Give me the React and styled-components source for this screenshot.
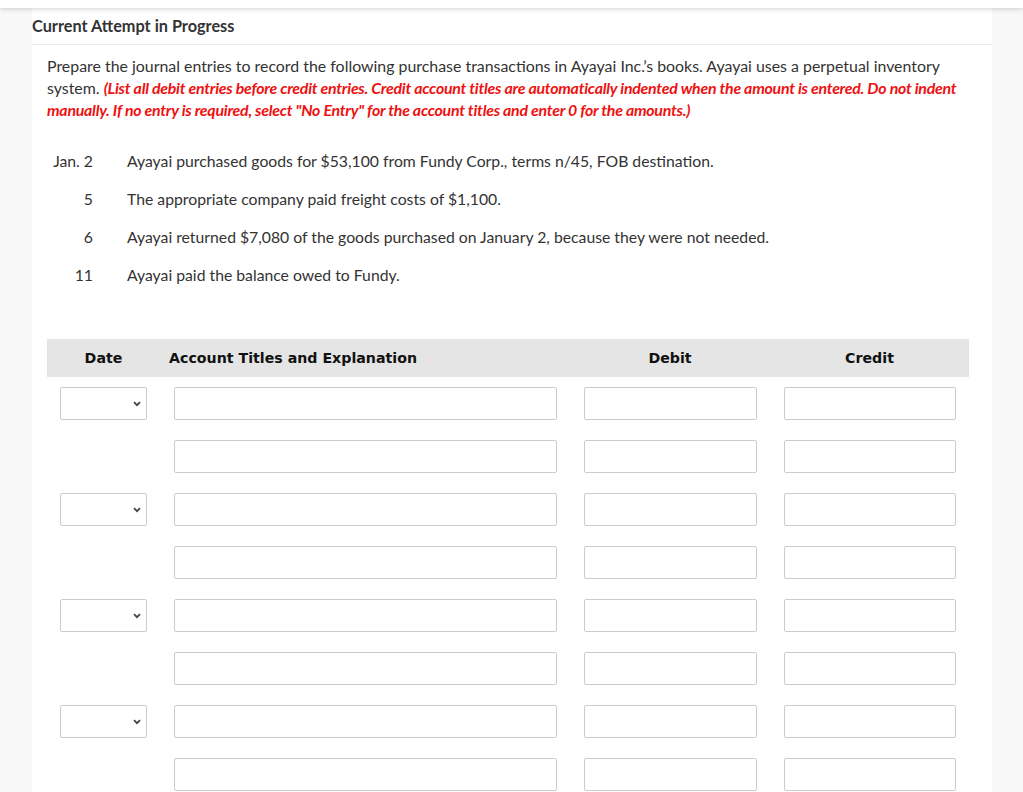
import styled, { createGlobalStyle } from "styled-components";

const GlobalStyle = createGlobalStyle`
  body {
    margin: 0;
    background: #f8f8f8;
    font-family: Lato, "Noto Sans", sans-serif;
    color: #333;
  }
`;

const transactions = [
  { date: "Jan. 2", text: "Ayayai purchased goods for $53,100 from Fundy Corp., terms n/45, FOB destination." },
  { date: "5", text: "The appropriate company paid freight costs of $1,100." },
  { date: "6", text: "Ayayai returned $7,080 of the goods purchased on January 2, because they were not needed." },
  { date: "11", text: "Ayayai paid the balance owed to Fundy." },
];

const rows = [true, false, true, false, true, false, true, false];

const Chevron = () => (
  <svg width="8" height="6" viewBox="0 0 8 6">
    <path d="M1 1.2 L4 4.2 L7 1.2" fill="none" stroke="#444" strokeWidth="1.8" />
  </svg>
);

const App = () => {
  return (
    <>
      <GlobalStyle />
      <TopBar />
      <Panel>
        <Heading>Current Attempt in Progress</Heading>
        <Body>
          <Intro>
            Prepare the journal entries to record the following purchase transactions in Ayayai Inc.’s books. Ayayai uses a perpetual inventory system.{" "}
            <Warn>
              (List all debit entries before credit entries. Credit account titles are automatically indented when the amount is entered. Do not indent manually. If no entry is required, select "No Entry" for the account titles and enter 0 for the amounts.)
            </Warn>
          </Intro>
          <TxList>
            {transactions.map((t) => (
              <TxRow key={t.date}>
                <TxDate>{t.date}</TxDate>
                <span>{t.text}</span>
              </TxRow>
            ))}
          </TxList>
          <Table>
            <HeadCell $align="center">Date</HeadCell>
            <HeadCell>Account Titles and Explanation</HeadCell>
            <HeadCell $align="center">Debit</HeadCell>
            <HeadCell $align="center">Credit</HeadCell>
            {rows.map((hasDate, i) => (
              <Row key={i}>
                <Cell>
                  {hasDate && (
                    <Select>
                      <Chevron />
                    </Select>
                  )}
                </Cell>
                <Cell>
                  <Field />
                </Cell>
                <Cell>
                  <Field />
                </Cell>
                <Cell>
                  <Field />
                </Cell>
              </Row>
            ))}
          </Table>
        </Body>
      </Panel>
    </>
  );
};

export default App;

const TopBar = styled.div`
  height: 8px;
  background: #fff;
  box-shadow: 0 1px 5px rgba(0, 0, 0, 0.18);
  position: relative;
  z-index: 1;
`;

const Panel = styled.div`
  margin-left: 32px;
  width: 960px;
  background: #fff;
  min-height: 784px;
`;

const Heading = styled.div`
  font-weight: 700;
  font-size: 16.3px;
  line-height: 20px;
  padding: 8px 0 8px 0;
  border-bottom: 1px solid #eaeaea;
  color: #333;
`;

const Body = styled.div`
  padding: 10px 15px 0 15px;
`;

const Intro = styled.p`
  margin: 0;
  font-size: 15.9px;
  line-height: 22px;
  color: #333;
`;

const Warn = styled.span`
  color: #ee1111;
  font-weight: 700;
  font-style: italic;
  letter-spacing: -0.25px;
`;

const TxList = styled.div`
  margin-top: 30px;
  display: flex;
  flex-direction: column;
  gap: 18px;
`;

const TxRow = styled.div`
  display: flex;
  font-size: 15.75px;
  line-height: 20px;
  gap: 34px;
`;

const TxDate = styled.span`
  width: 46px;
  text-align: right;
`;

const Table = styled.div`
  margin-top: 54px;
  width: 922px;
  display: grid;
  grid-template-columns: 113px 410px 200px 199px;
`;

const HeadCell = styled.div`
  background: #e5e5e5;
  height: 38px;
  display: flex;
  align-items: center;
  justify-content: ${(p) => (p.$align === "center" ? "center" : "flex-start")};
  padding-left: ${(p) => (p.$align === "center" ? "0" : "9px")};
  font-family: "DejaVu Sans", Verdana, sans-serif;
  font-weight: 700;
  font-size: 14.2px;
  color: #111;
`;

const Row = styled.div`
  display: contents;
`;

const Cell = styled.div`
  padding: 10px 13px 10px 14px;
  height: 33px;
  &:first-child {
    padding: 10px 13px;
  }
`;

const Field = styled.div`
  box-sizing: border-box;
  height: 33px;
  border: 1px solid #cccccc;
  border-radius: 2px;
  background: #fff;
`;

const Select = styled(Field)`
  display: flex;
  align-items: center;
  justify-content: flex-end;
  padding-right: 5px;
`;
